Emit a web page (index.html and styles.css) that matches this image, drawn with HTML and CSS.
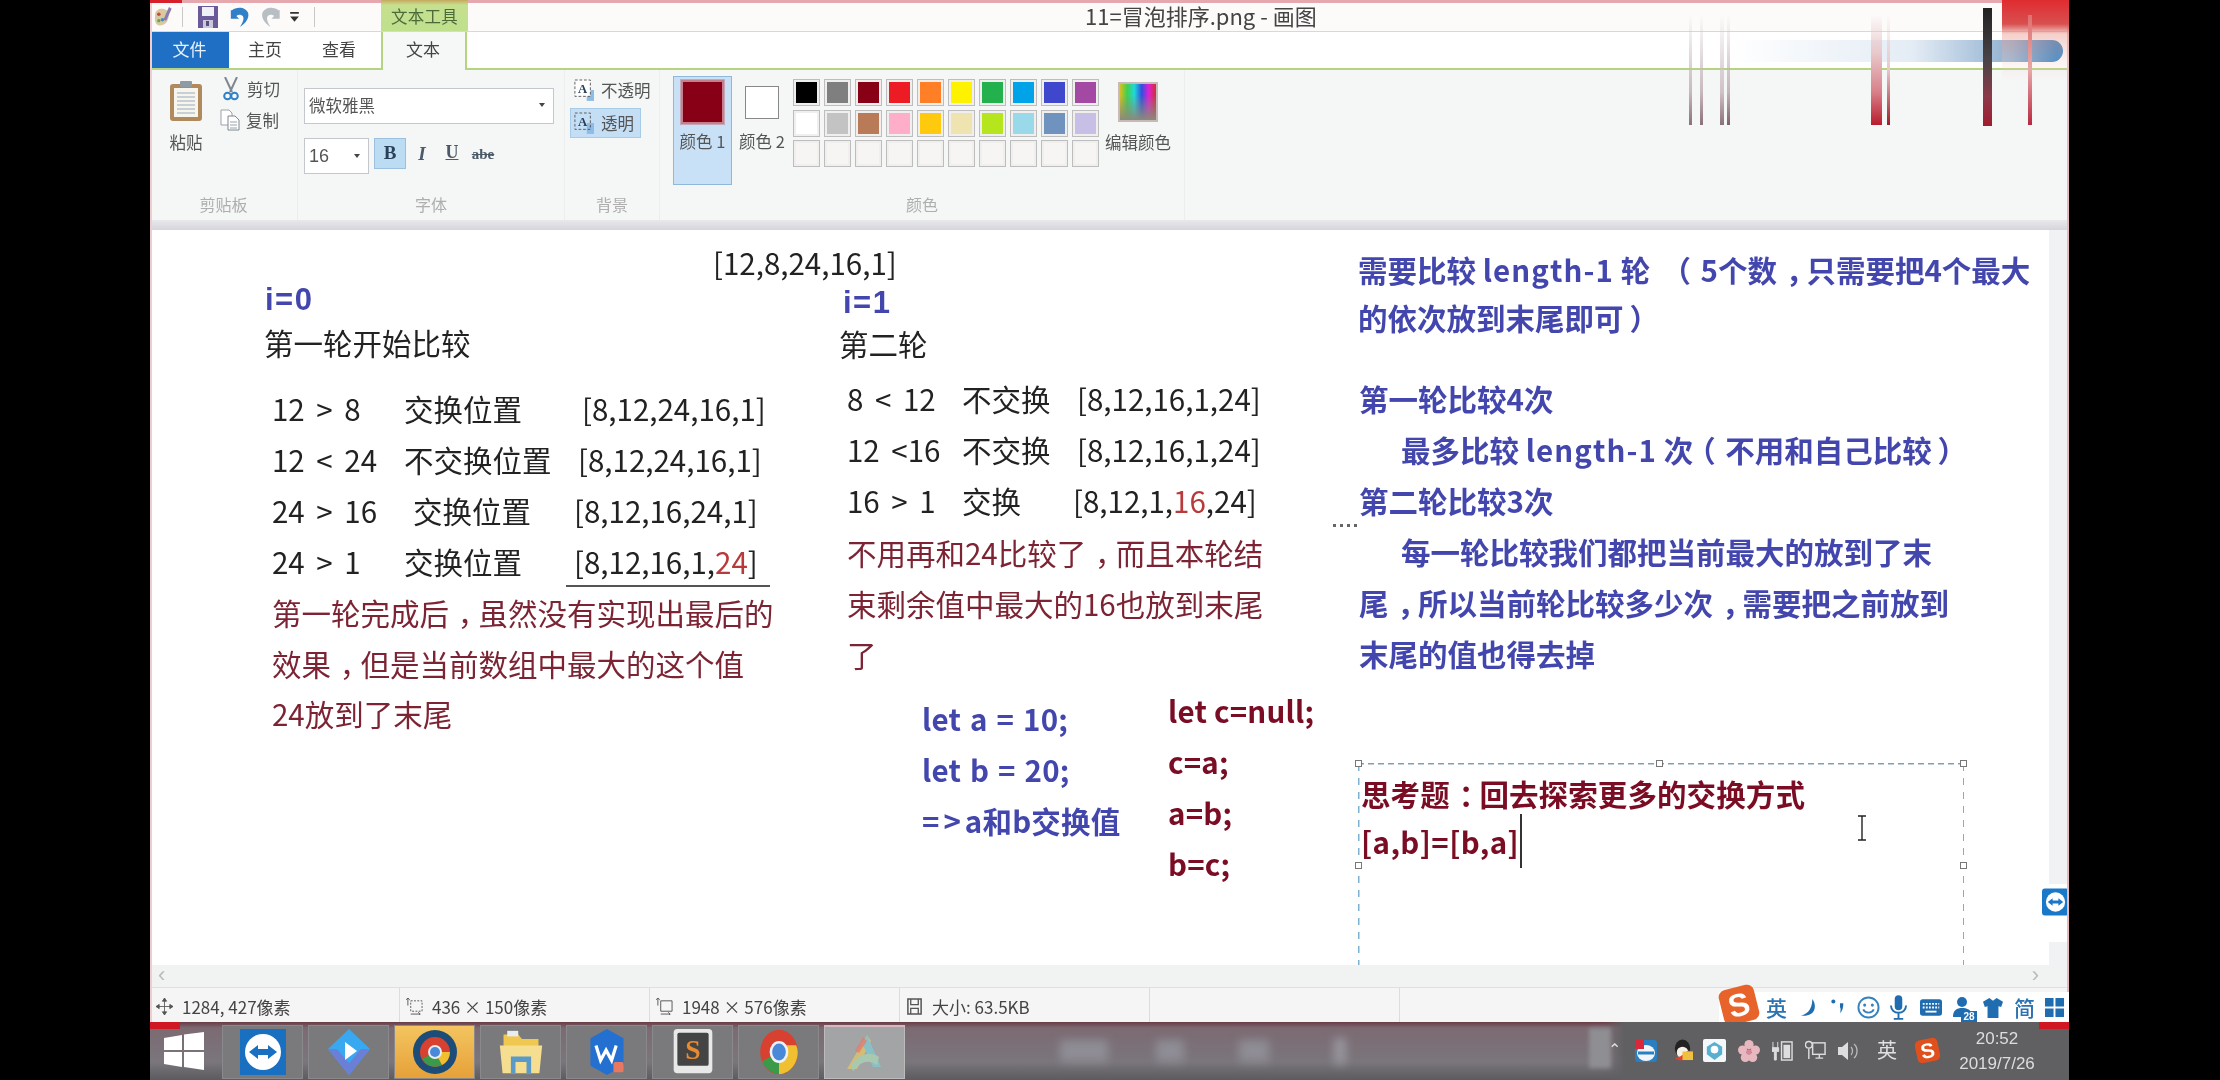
FILE: index.html
```html
<!DOCTYPE html>
<html lang="zh-CN">
<head>
<meta charset="utf-8">
<title>11=冒泡排序.png - 画图</title>
<link rel="stylesheet" href="styles.css">
</head>
<body>
<div class="screen">
  <div class="window">
    <header class="titlebar">
      <div class="qat">
        <svg class="q-paint" viewBox="0 0 22 24"><path d="M3 9C3 3 12 1 16 5c3 3 2 8 0 12-2 4-9 6-12 2-2-3-1-7-1-10z" fill="#d9c9a0"/><circle cx="7" cy="9" r="2" fill="#d04a3a"/><circle cx="11" cy="15" r="2" fill="#4a8ac8"/><circle cx="7" cy="16" r="1.8" fill="#5aa858"/><path d="M18 1l3 2-6 13-3-1z" fill="#8a7ab0"/></svg>
        <i class="q-sep"></i>
        <svg class="q-save" viewBox="0 0 20 22"><path d="M0 0h20v22H0z" fill="#6a5a9a"/><path d="M4 1h12v9H4z" fill="#eef0f6"/><path d="M5 14h10v8H5z" fill="#c9c9d8"/><path d="M8 15h3v5H8z" fill="#5a4a88"/></svg>
        <svg class="q-undo" viewBox="0 0 20 24"><path d="M1 5C6 0 17 1 19 8c1 6-3 11-9 15 3-5 5-9 3-12-2-2-5-2-7 0l3 3H0V4z" fill="#2f80c8"/></svg>
        <svg class="q-redo" viewBox="0 0 20 24"><path d="M19 5C14 0 3 1 1 8c-1 6 3 11 9 15-3-5-5-9-3-12 2-2 5-2 7 0l-3 3h9V4z" fill="#b9bec2"/></svg>
        <svg class="q-more" viewBox="0 0 10 12"><path d="M1 1h8v1.5H1zM1 5h8L5 10z" fill="#333"/></svg>
        <i class="q-sep"></i>
      </div>
      <div class="ctx-tab">文本工具</div>
      <div class="doc-title">11=冒泡排序.png - 画图</div>
    </header>

    <nav class="tabs">
      <div class="tab tab-file">文件</div>
      <div class="tab tab-home">主页</div>
      <div class="tab tab-view">查看</div>
      <div class="tab tab-text">文本</div>
    </nav>

    <section class="ribbon">
      <div class="group g-clip">
        <div class="g-body clip-body">
          <div class="paste">
            <svg class="paste-icon" viewBox="0 0 34 42"><rect x="1" y="4" width="32" height="37" rx="3" fill="#b08a5c"/><rect x="5" y="8" width="24" height="29" fill="#f7f5ec"/><path d="M8 13h18M8 17h18M8 21h18M8 25h18M8 29h18M8 33h18" stroke="#b9c3cf" stroke-width="1.5"/><rect x="11" y="1" width="12" height="6" rx="1" fill="#8f9aa3"/></svg>
            <span>粘贴</span>
          </div>
          <div class="clip-actions">
            <div class="clip-row"><svg class="ic-cut" viewBox="0 0 16 24"><path d="M2 0l7 15M14 0L7 15" stroke="#7d8790" stroke-width="2" fill="none"/><circle cx="4.5" cy="19" r="3.3" fill="none" stroke="#2f80c8" stroke-width="2"/><circle cx="11.5" cy="19" r="3.3" fill="none" stroke="#2f80c8" stroke-width="2"/></svg><span>剪切</span></div>
            <div class="clip-row"><svg class="ic-copy" viewBox="0 0 20 22"><path d="M1 1h8l3 3v12H1z" fill="#fff" stroke="#9aa3ab"/><path d="M8 7h7l4 4v10H8z" fill="#fff" stroke="#7d8790"/><path d="M10 13h7M10 16h7M10 19h7" stroke="#9aa3ab"/></svg><span>复制</span></div>
          </div>
        </div>
        <div class="g-label">剪贴板</div>
      </div>

      <div class="group g-font">
        <div class="g-body font-body">
          <div class="combo combo-font"><span>微软雅黑</span><i class="caret"></i></div>
          <div class="font-row">
            <div class="combo combo-size"><span>16</span><i class="caret"></i></div>
            <div class="fmt fmt-on fmt-b">B</div>
            <div class="fmt fmt-i">I</div>
            <div class="fmt fmt-u">U</div>
            <div class="fmt fmt-s">abe</div>
          </div>
        </div>
        <div class="g-label">字体</div>
      </div>

      <div class="group g-bg">
        <div class="g-body bg-body">
          <div class="bg-opt"><svg class="ic-a" viewBox="0 0 22 24"><rect x="14" y="12" width="8" height="12" fill="#8dbce6"/><rect x="1" y="1" width="17" height="18" fill="#fff" stroke="#555" stroke-dasharray="3 2"/><text x="9.5" y="15" text-anchor="middle" class="a-t">A</text></svg><span>不透明</span></div>
          <div class="bg-opt bg-on"><svg class="ic-a" viewBox="0 0 22 24"><rect x="14" y="12" width="8" height="12" fill="#8dbce6"/><rect x="1" y="1" width="17" height="18" fill="none" stroke="#555" stroke-dasharray="3 2"/><text x="9.5" y="15" text-anchor="middle" class="a-t">A</text></svg><span>透明</span></div>
        </div>
        <div class="g-label">背景</div>
      </div>

      <div class="group g-color">
        <div class="g-body color-body">
          <div class="color-btn color-on"><i class="sw sw-1"></i><span>颜色 1</span></div>
          <div class="color-btn color-two"><i class="sw sw-2"></i><span>颜色 2</span></div>
          <div class="palette">
            <i class="c c1"></i><i class="c c2"></i><i class="c c3"></i><i class="c c4"></i><i class="c c5"></i><i class="c c6"></i><i class="c c7"></i><i class="c c8"></i><i class="c c9"></i><i class="c c10"></i>
            <i class="c c11"></i><i class="c c12"></i><i class="c c13"></i><i class="c c14"></i><i class="c c15"></i><i class="c c16"></i><i class="c c17"></i><i class="c c18"></i><i class="c c19"></i><i class="c c20"></i>
            <i class="c"></i><i class="c"></i><i class="c"></i><i class="c"></i><i class="c"></i><i class="c"></i><i class="c"></i><i class="c"></i><i class="c"></i><i class="c"></i>
          </div>
          <div class="edit-color"><i class="rainbow"></i><span>编辑颜色</span></div>
        </div>
        <div class="g-label">颜色</div>
      </div>
    </section>
    <div class="ribbon-edge"></div>

    <main class="workspace">
      <div class="canvas">
        <div class="t t-arr">[12,8,24,16,1]</div>
        <div class="t t-i0 blue b idx">i=0</div>
        <div class="t t-h1">第一轮开始比较</div>
        <div class="t t-rows1">
          <div class="row"><span class="w132 cmp">12 &gt; 8</span><span class="w178">交换位置</span><span>[8,12,24,16,1]</span></div>
          <div class="row"><span class="w132 cmp">12 &lt; 24</span><span class="w174">不交换位置</span><span>[8,12,24,16,1]</span></div>
          <div class="row"><span class="w141 cmp">24 &gt; 16</span><span class="w161">交换位置</span><span>[8,12,16,24,1]</span></div>
          <div class="row"><span class="w132 cmp">24 &gt; 1</span><span class="w170">交换位置</span><span>[8,12,16,1,<em class="hot">24</em>]</span></div>
        </div>
        <div class="t t-rule"></div>
        <div class="t t-note1 red">第一轮完成后<span class="cp">，</span>虽然没有实现出最后的<br>效果<span class="cp">，</span>但是当前数组中最大的这个值<br>24放到了末尾</div>

        <div class="t t-i1 blue b idx">i=1</div>
        <div class="t t-h2">第二轮</div>
        <div class="t t-rows2">
          <div class="row"><span class="w115 cmp">8 &lt; 12</span><span class="w115">不交换</span><span>[8,12,16,1,24]</span></div>
          <div class="row"><span class="w115 cmp">12 &lt;16</span><span class="w115">不交换</span><span>[8,12,16,1,24]</span></div>
          <div class="row"><span class="w115 cmp">16 &gt; 1</span><span class="w111">交换</span><span>[8,12,1,<em class="hot">16</em>,24]</span></div>
        </div>
        <div class="t t-note2 red">不用再和24比较了<span class="cp">，</span>而且本轮结<br>束剩余值中最大的16也放到末尾<br>了</div>

        <div class="t t-let blue b">let a = 10;<br>let b = 20;<br><span class="arrow">=&gt;</span>a和b交换值</div>
        <div class="t t-swap maroon b">let c=null;<br>c=a;<br>a=b;<br>b=c;</div>

        <div class="t t-need blue b">需要比较 <span class="lat">length-1</span> 轮 &nbsp;<span class="ol ol-wide">（</span>5个数<span class="cp">，</span>只需要把4个最大<br>的依次放到末尾即可<span class="cr">）</span></div>
        <div class="t t-rounds blue b">
          <div>第一轮比较4次</div>
          <div class="ind">最多比较 <span class="lat">length-1</span> 次<span class="ol">（</span>不用和自己比较<span class="cr">）</span></div>
          <div>第二轮比较3次</div>
          <div class="ind">每一轮比较我们都把当前最大的放到了末</div>
          <div>尾<span class="cp">，</span>所以当前轮比较多少次<span class="cp">，</span>需要把之前放到</div>
          <div>末尾的值也得去掉</div>
        </div>
        <div class="t t-dots"></div>

        <div class="t selbox">
          <i class="h h-tl"></i><i class="h h-tm"></i><i class="h h-tr"></i><i class="h h-ml"></i><i class="h h-mr"></i>
          <div class="sel-text maroon b">思考题<span class="cp">：</span>回去探索更多的交换方式<br><span class="caret-line">[a,b]=[b,a]</span></div>
          <svg class="ibeam" viewBox="0 0 10 26"><path d="M1 1h8M5 1v24M1 25h8" stroke="#222" stroke-width="1.4" fill="none"/></svg>
        </div>
      </div>
      <div class="vscroll"></div>
      <div class="tv-tab">
        <svg viewBox="0 0 28 28"><rect width="28" height="28" rx="3" fill="#1a78c8"/><circle cx="14" cy="14" r="10" fill="#fff"/><path d="M6 14l5-4v2.5h6V10l5 4-5 4v-2.5h-6V18z" fill="#1a78c8"/></svg>
      </div>
    </main>

    <div class="hscroll"><span>‹</span><span>›</span></div>

    <footer class="status">
      <div class="st-cell"><svg class="st-ic" viewBox="0 0 16 16"><path d="M8 0v16M0 8h16M8 0L6 3h4zM8 16l-2-3h4zM0 8l3-2v4zM16 8l-3-2v4z" stroke="#555" fill="#555" stroke-width=".8"/></svg><span>1284, 427像素</span></div>
      <div class="st-cell"><svg class="st-ic" viewBox="0 0 18 18"><path d="M5 3h12v11H5z" fill="none" stroke="#555" stroke-dasharray="2 1.5"/><path d="M2 0v8M0 2l2-2 2 2M5 17h10M13 15l2 2-2 2" stroke="#555" fill="none"/></svg><span>436 × 150像素</span></div>
      <div class="st-cell"><svg class="st-ic" viewBox="0 0 18 18"><path d="M5 3h12v11H5z" fill="none" stroke="#555"/><path d="M2 0v8M0 2l2-2 2 2M5 17h10M13 15l2 2-2 2" stroke="#555" fill="none"/></svg><span>1948 × 576像素</span></div>
      <div class="st-cell"><svg class="st-ic" viewBox="0 0 16 18"><path d="M1 1h14v16H1z" fill="none" stroke="#555" stroke-width="1.6"/><path d="M4 1v6h8V1M4 17v-6h8v6" fill="none" stroke="#555" stroke-width="1.4"/></svg><span>大小: 63.5KB</span></div>
      <div class="st-cell st-last"></div>
    </footer>

    <div class="win-border"></div>
    <div class="red-tl"></div>
    <div class="streaks">
      <i class="blue-bar"></i>
      <i class="close-blur"></i>
      <i class="st st1"></i><i class="st st2"></i><i class="st st3"></i><i class="st st4"></i>
      <i class="st st5"></i><i class="st st6"></i><i class="st st7"></i><i class="st st8"></i>
    </div>

    <div class="sogou">
      <div class="sg-logo"><span>S</span></div>
      <span class="sg-t sg-ying">英</span>
      <svg class="sg-i sg-moon" viewBox="0 0 20 24"><path d="M14 0c6 8 4 22-14 20 6-1 14-6 14-20z" fill="#1f6db0"/></svg>
      <svg class="sg-i sg-punc" viewBox="0 0 16 18"><circle cx="3" cy="3" r="2.4" fill="#1f6db0"/><path d="M11 5h4c0 5-1 9-4 12 1-3 1-6 0-7z" fill="#1f6db0"/></svg>
      <svg class="sg-i sg-smile" viewBox="0 0 24 24"><circle cx="12" cy="12" r="10.5" fill="none" stroke="#3a82bb" stroke-width="2"/><circle cx="8" cy="9.5" r="1.6" fill="#3a82bb"/><circle cx="16" cy="9.5" r="1.6" fill="#3a82bb"/><path d="M6.5 14c2 4.5 9 4.5 11 0" fill="none" stroke="#3a82bb" stroke-width="2"/></svg>
      <svg class="sg-i sg-mic" viewBox="0 0 18 26"><rect x="5" y="0" width="8" height="16" rx="4" fill="#1f6db0"/><path d="M1 11c0 10 16 10 16 0M9 19v5M4 25h10" fill="none" stroke="#1f6db0" stroke-width="2"/></svg>
      <svg class="sg-i sg-kb" viewBox="0 0 24 18"><rect width="24" height="18" rx="3" fill="#1f6db0"/><path d="M3 5h18M3 9h18" stroke="#fff" stroke-width="2" stroke-dasharray="2 1.4"/><path d="M6 13.500h12" stroke="#fff" stroke-width="2"/></svg>
      <svg class="sg-i sg-user" viewBox="0 0 24 26"><circle cx="9" cy="6" r="5" fill="#1f6db0"/><path d="M0 21c0-7 4-9 9-9s8 2 9 4H9v5z" fill="#1f6db0"/><rect x="8" y="15" width="16" height="11" fill="#1f6db0"/><text x="16" y="24" text-anchor="middle" class="sg-28">28</text></svg>
      <svg class="sg-i sg-shirt" viewBox="0 0 22 22"><path d="M7 0l4 3 4-3 7 4-2 6-3-1v13H5V9L2 10 0 4z" fill="#1f6db0"/></svg>
      <span class="sg-t sg-jian">简</span>
      <svg class="sg-i sg-grid" viewBox="0 0 20 20"><path d="M0 0h9v9H0zM11 0h9v9h-9zM0 11h9v9H0zM11 11h9v9h-9z" fill="#1f6db0"/></svg>
    </div>

    <div class="taskbar">
      <svg class="tb-win" viewBox="0 0 40 38"><path d="M0 6l18-3v15H0zM20 2.500L40 0v18H20zM0 20h18v15L0 32zM20 20h20v18l-20-3z" fill="#fff"/></svg>
      <div class="tb-btn tb-tv"><svg viewBox="0 0 46 46"><rect width="46" height="46" fill="#1a70c0"/><circle cx="23" cy="23" r="18" fill="#fff"/><path d="M9 23l9-7v4h10v-4l9 7-9 7v-4H18v4z" fill="#1a70c0"/></svg></div>
      <div class="tb-btn tb-play"><svg viewBox="0 0 42 46"><path d="M21 0l21 20-21 26L0 20z" fill="#38a8f0"/><path d="M21 34l12-14 9 0-21 26L0 20h9z" fill="#6a80d8"/><path d="M17 13l12 9-12 9z" fill="#fff"/></svg></div>
      <div class="tb-btn tb-active"><svg viewBox="0 0 46 46"><circle cx="23" cy="23" r="22" fill="#1c4d78"/><circle cx="23" cy="23" r="15" fill="#d8402f"/><path d="M23 23L10 30a15 15 0 0 0 20 6z" fill="#3a9a4a"/><path d="M23 23l7 13a15 15 0 0 0 8-13z" fill="#f0c030"/><circle cx="23" cy="23" r="7" fill="#e8eef5"/><circle cx="23" cy="23" r="5" fill="#4a88d8"/></svg></div>
      <div class="tb-btn tb-folder"><svg viewBox="0 0 46 50"><path d="M4 6h16l4 5h18v32H4z" fill="#f0c850"/><path d="M8 2h12v6H8z" fill="#e8eef0"/><path d="M0 18h46l-3 30H3z" fill="#f5de90"/><path d="M12 30h22v18h-5V36H17v12h-5z" fill="#5a9ac8"/></svg></div>
      <div class="tb-btn tb-wps"><svg viewBox="0 0 40 50"><path d="M20 0l18 10v30l-18 10L2 40V10z" fill="#2470d0"/><path d="M8 18l5 16 6-11 6 11 5-16" fill="none" stroke="#fff" stroke-width="3.5"/><rect x="27" y="36" width="11" height="11" rx="2" fill="#e87860"/></svg></div>
      <div class="tb-btn tb-sub"><svg viewBox="0 0 44 50"><rect x="1" y="0" width="42" height="48" rx="4" fill="#e8e8e8"/><rect x="5" y="4" width="34" height="36" rx="2" fill="#444"/><text x="22" y="33" text-anchor="middle" class="sub-s">S</text></svg></div>
      <div class="tb-btn tb-chrome"><svg viewBox="0 0 46 54"><ellipse cx="23" cy="27" rx="22" ry="26" fill="#d8402f"/><path d="M23 27L3 38c4 9 12 15 20 15z" fill="#3a9a4a"/><path d="M23 27v26c12 0 22-12 22-26 0-3-1-6-2-8H23z" fill="#f0c030"/><ellipse cx="23" cy="27" rx="11" ry="13" fill="#eef2f7"/><ellipse cx="23" cy="27" rx="8" ry="10" fill="#4a88d8"/></svg></div>
      <div class="tb-btn tb-last"><svg viewBox="0 0 44 46"><path d="M4 40L24 6l4 6L14 40z" fill="#d8c070" opacity=".9"/><path d="M24 6l14 32h-8L20 16z" fill="#88c0c8"/><path d="M8 36c8-12 20-14 28-8l-2 8c-8-6-16-4-24 6z" fill="#a8c8b0"/><path d="M20 8l4 4-8 12-4-2z" fill="#e08070" opacity=".8"/></svg></div>
      <div class="smear">
        <i class="sm sm1"></i><i class="sm sm2"></i><i class="sm sm3"></i><i class="sm sm4"></i>
      </div>
      <div class="tray">
        <i class="tr-blob"></i>
        <span class="tr-up">⌃</span>
        <svg class="tr-i tr-blue" viewBox="0 0 22 22"><rect width="22" height="22" rx="3" fill="#2a7fc0"/><ellipse cx="11" cy="13" rx="9" ry="8" fill="#f2f6fa"/><path d="M3 13h16" stroke="#2a7fc0" stroke-width="3"/><rect x="0" y="0" width="9" height="9" fill="#d8283a"/></svg>
        <svg class="tr-i tr-qq" viewBox="0 0 22 24"><ellipse cx="11" cy="10" rx="8" ry="9.500" fill="#222"/><ellipse cx="11" cy="14" rx="6" ry="6" fill="#f5f0e8"/><path d="M3 20c3 3 10 3 16 0l3-6-5-2-8 6z" fill="#e04030"/><rect x="11" y="13" width="11" height="9" fill="#f0c040"/></svg>
        <svg class="tr-i tr-p" viewBox="0 0 24 24"><rect width="24" height="24" rx="2" fill="#f4f8fa"/><path d="M12 3l8 5v8l-8 6-8-6V8z" fill="#58b0d0"/><circle cx="12" cy="11" r="4" fill="#fff"/></svg>
        <svg class="tr-i tr-fl" viewBox="0 0 24 24"><g fill="#e8b8c0"><circle cx="12" cy="5" r="5"/><circle cx="5" cy="11" r="5"/><circle cx="19" cy="11" r="5"/><circle cx="8" cy="19" r="5"/><circle cx="16" cy="19" r="5"/></g><circle cx="12" cy="13" r="3" fill="#d88898"/></svg>
        <svg class="tr-i tr-bat" viewBox="0 0 22 22"><path d="M1 2v6M6 2v6M0 8h7v4H4.500v9H2.500v-9H0z" fill="#ddd" stroke="#ddd"/><rect x="10" y="2" width="11" height="19" fill="none" stroke="#ddd" stroke-width="1.500"/><rect x="12" y="5" width="7" height="14" fill="#ddd"/></svg>
        <svg class="tr-i tr-net" viewBox="0 0 22 22"><rect x="8" y="3" width="13" height="12" fill="none" stroke="#ddd" stroke-width="1.500"/><path d="M11 19h8M15 15v4" stroke="#ddd" stroke-width="1.500"/><circle cx="4" cy="5" r="3.500" fill="none" stroke="#ddd" stroke-width="1.500"/><path d="M4 9v11" stroke="#ddd" stroke-width="1.500"/></svg>
        <svg class="tr-i tr-vol" viewBox="0 0 22 20"><path d="M0 6h4l6-5v18l-6-5H0z" fill="#ddd"/><path d="M13 6c2 2 2 6 0 8M16 3c4 3 4 11 0 14" fill="none" stroke="#bbb" stroke-width="1.300"/></svg>
        <span class="tr-ying">英</span>
        <div class="tr-s"><span>S</span></div>
        <div class="clock"><span>20:52</span><span>2019/7/26</span></div>
      </div>
    </div>
    <div class="red-bl"></div>
    <div class="red-br"></div>
  </div>
</div>
</body>
</html>
```

FILE: styles.css
```css
* { box-sizing: border-box; }
html, body { margin: 0; height: 100%; background: #000; overflow: hidden; }
body { font-family: "Noto Sans CJK SC", "Noto Sans", sans-serif; color: #333; }
i, em { font-style: normal; display: block; }
em { display: inline; }

.screen { width: 2220px; height: 1080px; padding-left: 150px; background: #000; }
.window { position: relative; width: 1919px; height: 1080px; display: flex; flex-direction: column; background: #fff; overflow: hidden; filter: blur(0.6px); }

/* title bar */
.titlebar { height: 32px; display: flex; align-items: stretch; background: #fdfafa; border-bottom: 1px solid #d8d8d8; border-top: 3px solid #e4a8ae; position: relative; }
.qat { width: 231px; display: flex; align-items: center; padding-left: 2px; }
.qat svg { display: block; flex: none; }
.q-paint { width: 21px; height: 22px; margin-right: 9px; }
.q-sep { width: 1px; height: 20px; background: #c8c8c8; }
.q-save { width: 20px; height: 22px; margin-left: 15px; }
.q-undo { width: 20px; height: 22px; margin-left: 12px; }
.q-redo { width: 21px; height: 22px; margin-left: 10px; }
.q-more { width: 11px; height: 13px; margin-left: 8px; }
.qat .q-sep:last-child { margin-left: 14px; }
.ctx-tab { width: 87px; margin-top: -3px; background: linear-gradient(#c6a860 0, #c5e08e 5px, #bfe08c 100%); color: #4c6a38; font-size: 16.5px; line-height: 32px; text-align: center; letter-spacing: .2px; }
.doc-title { margin-left: 617px; font-size: 22px; line-height: 25px; color: #444; white-space: nowrap; }

/* tabs */
.tabs { height: 38px; display: flex; background: #fff; border-bottom: 2px solid #b4d482; font-size: 17px; color: #444; position: relative; }
.tab { line-height: 34px; text-align: center; }
.tab-file { width: 79px; background: #1f70c4; color: #e8f2fb; height: 36px; }
.tab-home { width: 74px; padding-left: 19px; text-align: left; }
.tab-view { width: 78px; padding-left: 19px; text-align: left; }
.tab-text { width: 86px; height: 38px; background: #f6f7f7; border: solid #b4d482; border-width: 0 2px; padding-right: 2px; }

/* ribbon */
.ribbon { height: 150px; display: flex; background: #f5f6f6; font-size: 16.5px; color: #555; }
.group { display: flex; flex-direction: column; border-right: 1px solid #eceded; }
.g-body { flex: 1; display: flex; min-height: 0; }
.g-label { height: 28px; margin-bottom: 2px; text-align: center; font-size: 16px; line-height: 28px; color: #aeaeae; }
.g-clip { width: 148px; }
.clip-body { padding: 10px 0 0 18px; gap: 16px; }
.paste { width: 36px; display: flex; flex-direction: column; align-items: center; gap: 10px; }
.paste-icon { width: 34px; height: 42px; flex: none; }
.paste span { white-space: nowrap; line-height: 20px; }
.clip-actions { display: flex; flex-direction: column; gap: 9px; margin-top: -2px; }
.clip-row { display: flex; align-items: center; height: 22px; gap: 6px; white-space: nowrap; }
.ic-cut { width: 16px; height: 24px; margin-left: 3px; margin-right: 2px; }
.ic-copy { width: 20px; height: 22px; }
.g-font { width: 267px; }
.font-body { flex-direction: column; padding: 18px 0 0 6px; }
.combo { background: #fff; border: 1px solid #c4c8cc; display: flex; align-items: center; justify-content: space-between; padding: 0 8px 0 4px; color: #555; }
.combo-font { width: 250px; height: 36px; font-size: 16.5px; padding-bottom: 2px; }
.font-row { display: flex; align-items: flex-start; margin-top: 14px; }
.combo-size { width: 65px; height: 36px; font-size: 18px; font-family: "Liberation Sans", sans-serif; }
.caret { width: 0; height: 0; border: 3.500px solid transparent; border-top: 4px solid #444; border-bottom: 0; }
.fmt { font-family: "Liberation Serif", serif; font-weight: 700; color: #4a5a6a; text-align: center; }
.fmt-on { background: #bcdcf4; border: 1px solid #9cc0e0; }
.fmt-b { width: 32px; height: 31px; margin-left: 5px; font-size: 19px; line-height: 27px; color: #2a4058; }
.fmt-i { width: 16px; margin-left: 8px; font-size: 19px; line-height: 31px; font-style: italic; }
.fmt-u { width: 14px; margin-left: 15px; font-size: 18px; line-height: 28px; text-decoration: underline; }
.fmt-s { width: 26px; margin-left: 11px; font-size: 15px; line-height: 33px; text-decoration: line-through; }
.g-bg { width: 95px; }
.bg-body { flex-direction: column; padding: 5px 0 0 5px; gap: 3px; }
.bg-opt { height: 30px; display: flex; align-items: center; gap: 7px; padding-left: 4px; white-space: nowrap; width: 71px; }
.bg-on { background: #c4dff5; border: 1px solid #a8cbe8; padding-left: 3px; }
.ic-a { width: 20px; height: 22px; flex: none; }
.a-t { font: 700 14px "Liberation Serif", serif; fill: #2a4058; }
.g-color { width: 525px; }
.color-body { padding: 6px 0 0 13px; }
.color-btn { display: flex; flex-direction: column; align-items: center; white-space: nowrap; }
.color-btn span { line-height: 20px; }
.color-on { width: 59px; height: 109px; background: #c9e1f6; border: 1px solid #8fb8da; padding-top: 3px; gap: 7px; }
.sw { display: block; flex: none; }
.sw-1 { width: 43px; height: 44px; background: #880015; border: 2px solid #c4808c; outline: 1px solid #c8a8b8; }
.color-two { width: 60px; padding-top: 10px; gap: 12px; }
.sw-2 { width: 34px; height: 33px; background: #fff; border: 1px solid #888; }
.palette { margin: 3px 0 0 1px; display: grid; grid-template-columns: repeat(10, 27px); grid-auto-rows: 27px; column-gap: 4px; row-gap: 3.500px; align-content: start; }
.c { background: #f7f5f4; border: 1px solid #bdbdbd; box-shadow: inset 0 0 0 2px #f0efee; }
.c1 { background: #000; } .c2 { background: #7f7f7f; } .c3 { background: #880015; } .c4 { background: #ed1c24; } .c5 { background: #ff7f27; }
.c6 { background: #fff200; } .c7 { background: #22b14c; } .c8 { background: #00a2e8; } .c9 { background: #3f48cc; } .c10 { background: #a349a4; }
.c11 { background: #fff; } .c12 { background: #c3c3c3; } .c13 { background: #b97a57; } .c14 { background: #ffaec9; } .c15 { background: #ffc90e; }
.c16 { background: #efe4b0; } .c17 { background: #b5e61d; } .c18 { background: #99d9ea; } .c19 { background: #7092be; } .c20 { background: #c8bfe7; }
.edit-color { width: 68px; margin-left: 5px; padding-top: 6px; display: flex; flex-direction: column; align-items: center; gap: 10px; white-space: nowrap; }
.edit-color span { line-height: 20px; }
.rainbow { width: 40px; height: 40px; border: 2px solid #c8b8b8; background: linear-gradient(transparent 30%, #8a8a7a 100%), linear-gradient(90deg, #d8c020, #40d050, #20d8d8, #3050e0, #e020d0, #d03030); }
.ribbon-edge { height: 10px; background: linear-gradient(#e8e8ec, #d5d5dc); }

/* canvas */
.workspace { flex: 1; min-height: 0; display: flex; position: relative; }
.canvas { flex: 1; position: relative; overflow: hidden; background: #fff; font-size: 29.5px; color: #222; }
.vscroll { width: 20px; background: #f1f2f3; }
.t { position: absolute; white-space: nowrap; line-height: 51px; }
.b { font-weight: 700; }
.blue { color: #4347ad; }
.red { color: #7d2434; }
.maroon { color: #7a0c24; }
.hot { color: #b83a3a; }
.cp { font-feature-settings: "halt" 1; padding: 0 .2em 0 .3em; }
.cr { font-feature-settings: "halt" 1; padding-left: .2em; }
.ol { font-feature-settings: "halt" 1; padding: 0 .32em 0 .26em; }
.ol-wide { margin-left: 5px; }
.lat { letter-spacing: 1.1px; }
.arrow { letter-spacing: 4px; }
.row { display: flex; height: 51px; }
.cmp { word-spacing: 5px; }
.idx { font-family: "Liberation Sans", sans-serif; font-size: 31px; letter-spacing: 1.5px; line-height: 30px; }
.w132 { width: 132px; } .w141 { width: 141px; } .w178 { width: 178px; } .w174 { width: 174px; } .w161 { width: 161px; } .w170 { width: 170px; } .w115 { width: 115px; } .w111 { width: 111px; }
.t-arr { left: 563px; top: 13px; line-height: 38px; }
.t-i0 { left: 115px; top: 55px; }
.t-h1 { left: 114px; top: 87px; }
.t-rows1 { left: 122px; top: 153px; }
.t-rule { left: 416px; top: 355px; width: 204px; height: 2px; background: #555; }
.t-note1 { left: 122px; top: 357px; line-height: 50.500px; }
.t-i1 { left: 693px; top: 58px; }
.t-h2 { left: 689px; top: 88px; }
.t-rows2 { left: 697px; top: 143px; }
.t-note2 { left: 697px; top: 297px; }
.t-let { left: 772px; top: 463px; word-spacing: 2px; letter-spacing: .2px; }
.t-swap { left: 1018px; top: 455px; letter-spacing: .2px; }
.t-need { left: 1208px; top: 15px; line-height: 48px; }
.t-rounds { left: 1209px; top: 143px; }
.ind { padding-left: 42px; }
.t-dots { left: 1183px; top: 294px; width: 26px; height: 3px; background: repeating-linear-gradient(90deg, #666 0 3px, transparent 3px 7px); }
.selbox { left: 1208px; top: 533px; width: 606px; height: 260px; background:
  repeating-linear-gradient(90deg, #7f9fb4 0 6px, transparent 6px 10px) top / 100% 1.500px no-repeat,
  repeating-linear-gradient(0deg, #7fb0d0 0 7px, transparent 7px 14px) left / 1.500px 100% no-repeat,
  repeating-linear-gradient(0deg, #7fb0d0 0 7px, transparent 7px 14px) right / 1.500px 100% no-repeat; }
.h { position: absolute; width: 7px; height: 7px; background: #fff; border: 1.500px solid #777; }
.h-tl { left: -3px; top: -3px; } .h-tm { left: 298px; top: -3px; } .h-tr { right: -3px; top: -3px; }
.h-ml { left: -3px; top: 99px; } .h-mr { right: -3px; top: 99px; }
.sel-text { position: absolute; left: 3px; top: 6px; line-height: 48px; letter-spacing: .1px; }
.caret-line { border-right: 2px solid #333; padding: 6px 1px 6px 0; letter-spacing: .4px; }
.ibeam { position: absolute; left: 499px; top: 52px; width: 10px; height: 26px; }
.tv-tab { position: absolute; right: 0; top: 654px; width: 29px; height: 58px; background: #fff; border-radius: 5px 0 0 5px; padding: 4px 0 0 2px; }
.tv-tab svg { display: block; width: 27px; height: 28px; }

/* scroll + status */
.hscroll { height: 23px; background: #f1f2f2; border-bottom: 1px solid #e0e0e0; display: flex; justify-content: space-between; padding: 0 30px 0 8px; font: 22px/20px "Liberation Sans", sans-serif; color: #bbb; }
.status { height: 34px; display: flex; background: #f5f5f5; font-size: 17px; line-height: 34px; color: #444; }
.st-cell { width: 250px; display: flex; align-items: center; gap: 9px; padding: 3px 0 0 6px; border-right: 1px solid #dcdcdc; white-space: nowrap; }
.st-ic { width: 17px; height: 17px; flex: none; }

/* overlays */
.win-border { position: absolute; left: 0; top: 0; right: 0; height: 1022px; border-right: 2px solid #e8b8bc; border-left: 2px solid #eecdd0; pointer-events: none; }
.red-tl { position: absolute; left: 0; top: 0; width: 32px; height: 3px; background: #d8202c; }
.red-bl { position: absolute; left: 0; top: 1022px; width: 30px; height: 7px; background: #d01822; }
.red-br { position: absolute; right: 0; top: 1022px; width: 30px; height: 7px; background: #d01822; }
.streaks { position: absolute; inset: 0; pointer-events: none; }
.blue-bar { position: absolute; left: 1580px; top: 40px; width: 333px; height: 22px; border-radius: 0 11px 11px 0; background: linear-gradient(90deg, rgba(215,228,240,0), rgba(205,220,236,.55) 55%, #8fb0d0 85%, #2a80c4 98%); }
.close-blur { position: absolute; left: 1852px; top: 0; width: 67px; height: 80px; background: linear-gradient(#e02c30 0, #d85050 24px, rgba(232,150,140,.45) 34px, rgba(240,200,190,.25) 60px, rgba(255,255,255,0) 80px); }
.st { position: absolute; top: 15px; height: 110px; }
.st1 { left: 1539px; width: 3px; background: linear-gradient(transparent, #c8babc 70%, #8a7078); }
.st2 { left: 1550px; width: 3px; background: linear-gradient(transparent, #c8babc 70%, #8a7078); }
.st3 { left: 1570px; width: 4px; background: linear-gradient(transparent, #d0c2c6 70%, #8a7078); }
.st4 { left: 1577px; width: 3px; background: linear-gradient(transparent, #c4b4bc 70%, #806068); }
.st5 { left: 1721px; width: 11px; background: linear-gradient(transparent, #e8c8ca 35%, #d8808a 70%, #b81c2c 100%); }
.st6 { left: 1737px; width: 3px; background: linear-gradient(transparent, #e8c8c8 50%, #a01c28 100%); }
.st7 { left: 1833px; top: 8px; height: 118px; width: 9px; background: linear-gradient(#222, #4a4448 45%, #8a3a48 75%, #a01c30 100%); }
.st8 { left: 1878px; width: 4px; background: linear-gradient(#e07070, #e8a8a8 50%, #b82840 100%); }

/* sogou */
.sogou { position: absolute; left: 1569px; top: 992px; width: 350px; height: 30px; background: #fff; display: flex; align-items: center; }
.sg-logo { position: absolute; left: 2px; top: -5px; width: 36px; height: 36px; background: #e8632a; border-radius: 7px; transform: rotate(-14deg); color: #fff; font: 700 32px/36px "Liberation Sans", sans-serif; text-align: center; }
.sg-t { position: absolute; top: 1px; font-size: 21px; line-height: 28px; color: #2a72b0; font-weight: 500; }
.sg-i { position: absolute; display: block; }
.sg-ying { left: 47px; } .sg-jian { left: 295px; }
.sg-moon { left: 80px; top: 7px; width: 20px; height: 20px; }
.sg-punc { left: 111px; top: 7px; width: 15px; height: 15px; }
.sg-smile { left: 138px; top: 4px; width: 23px; height: 23px; }
.sg-mic { left: 171px; top: 3px; width: 17px; height: 25px; }
.sg-kb { left: 201px; top: 7px; width: 22px; height: 17px; }
.sg-user { left: 234px; top: 4px; width: 24px; height: 26px; }
.sg-28 { font: 700 10px "Liberation Sans", sans-serif; fill: #fff; }
.sg-shirt { left: 264px; top: 6px; width: 20px; height: 20px; }
.sg-grid { left: 326px; top: 6px; width: 19px; height: 19px; }

/* taskbar */
.taskbar { height: 58px; flex: none; display: flex; align-items: flex-start; position: relative; background: linear-gradient(#6a3c46 0, #7c6a72 6px, #7a767c 40px, #5c5b5e 100%); }
.tb-win { width: 40px; height: 38px; margin: 10px 18px 0 14px; flex: none; }
.tb-btn { width: 81px; height: 54px; margin: 3px 5px 0 0; display: flex; align-items: center; justify-content: center; background: #7a7a7c; box-shadow: inset 0 0 0 1px #8a8a8c; flex: none; }
.tb-btn svg { display: block; width: 46px; height: 46px; }
.tb-active { background: linear-gradient(#f4c560, #e6a038); }
.tb-last { background: #a2a4a6; box-shadow: inset 0 2px 0 #d8b8bc, inset 0 0 0 1px #bbb; }
.sub-s { font: 700 30px "Liberation Serif", serif; fill: #e88a30; }
.smear { display: flex; align-items: center; height: 58px; margin-left: 150px; filter: blur(5px); }
.sm { height: 22px; background: #8f8d95; }
.sm1 { width: 48px; }
.sm2 { width: 28px; margin-left: 48px; }
.sm3 { width: 30px; margin-left: 55px; }
.sm4 { width: 12px; height: 26px; margin-left: 65px; background: #98969e; }
.tray { position: absolute; left: 1455px; right: 0; top: 0; height: 58px; background: linear-gradient(90deg, transparent, #605f62 20px); color: #ddd; }
.tr-blob { position: absolute; left: -16px; top: 6px; width: 22px; height: 40px; background: #8f8e92; filter: blur(2px); }
.tr-i { position: absolute; display: block; }
.tr-up { position: absolute; left: 3px; top: 18px; font: 16px/20px "Liberation Sans", sans-serif; }
.tr-blue { left: 30px; top: 18px; width: 22px; height: 22px; }
.tr-qq { left: 67px; top: 17px; width: 21px; height: 23px; }
.tr-p { left: 98px; top: 17px; width: 23px; height: 23px; }
.tr-fl { left: 133px; top: 18px; width: 22px; height: 22px; }
.tr-bat { left: 167px; top: 18px; width: 21px; height: 21px; }
.tr-net { left: 200px; top: 18px; width: 21px; height: 21px; }
.tr-vol { left: 233px; top: 19px; width: 22px; height: 20px; }
.tr-ying { position: absolute; left: 272px; top: 14px; font-size: 20px; line-height: 28px; color: #e0e0e0; }
.tr-s { position: absolute; left: 311px; top: 17px; width: 23px; height: 23px; border-radius: 5px; background: #e0501c; transform: rotate(-12deg); color: #fff; font: 700 21px/23px "Liberation Sans", sans-serif; text-align: center; }
.clock { position: absolute; right: 27px; top: 4px; width: 90px; display: flex; flex-direction: column; align-items: center; font: 17px/25px "Liberation Sans", sans-serif; color: #ddd; white-space: nowrap; }
```
